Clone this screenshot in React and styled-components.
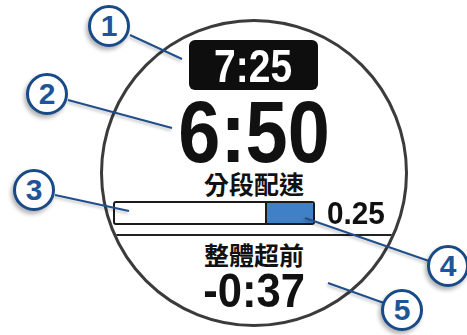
import styled, { createGlobalStyle } from 'styled-components';

const GlobalStyle = createGlobalStyle`
  html, body {
    margin: 0;
    padding: 0;
    background: #fff;
  }
`;

const callouts = [
  { n: 1, x: 109, y: 26 },
  { n: 2, x: 47, y: 94 },
  { n: 3, x: 34, y: 190 },
  { n: 4, x: 448, y: 266 },
  { n: 5, x: 402, y: 310 },
];

const leaders = [
  [130, 35, 182, 59],
  [68, 100, 172, 128],
  [55, 195, 129, 211],
  [305, 218, 429, 261],
  [328, 283, 384, 303],
];

export default function App() {
  return (
    <>
      <GlobalStyle />
      <Stage>
        <Face>
          <TimeBox>
            <TimeText>7:25</TimeText>
          </TimeBox>
          <Pace>6:50</Pace>
          <Label>分段配速</Label>
          <BarRow>
            <Bar>
              <BarFill $share={0.23} />
            </Bar>
            <BarValue>0.25</BarValue>
          </BarRow>
          <Divider />
          <Label $second>整體超前</Label>
          <Delta>-0:37</Delta>
        </Face>
        <Leaders width="467" height="335" viewBox="0 0 467 335">
          {leaders.map(([x1, y1, x2, y2], i) => (
            <line key={i} x1={x1} y1={y1} x2={x2} y2={y2} />
          ))}
        </Leaders>
        {callouts.map((c) => (
          <Callout key={c.n} $x={c.x} $y={c.y}>
            {c.n}
          </Callout>
        ))}
      </Stage>
    </>
  );
}

const Stage = styled.div`
  position: relative;
  width: 467px;
  height: 335px;
  overflow: hidden;
  background: #fff;
`;

const Face = styled.div`
  position: absolute;
  left: 100px;
  top: 19px;
  width: 308px;
  height: 308px;
  box-sizing: border-box;
  border: 3px solid #3b3b3b;
  border-radius: 50%;
  overflow: hidden;
  display: flex;
  flex-direction: column;
  align-items: center;
  padding-top: 18px;
`;

// no narrow face installed, so the bold digits get squeezed horizontally
const digits = `
  font-family: "Liberation Sans Narrow", "Liberation Sans", sans-serif;
  font-weight: 700;
  color: #111;
  white-space: nowrap;
  letter-spacing: 0;
`;

const TimeBox = styled.div`
  width: 129px;
  height: 50px;
  margin-left: -1px;
  border-radius: 6px;
  background: #0e0e0e;
  display: flex;
  justify-content: center;
`;

const TimeText = styled.span`
  ${digits}
  display: inline-block;
  color: #fff;
  font-size: 47px;
  line-height: 52px;
  transform: scaleX(0.83);
`;

const Pace = styled.div`
  ${digits}
  margin-top: 6px;
  height: 72px;
  font-size: 88px;
  line-height: 72px;
  transform: scaleX(0.86);
`;

const Label = styled.div`
  font-family: "Noto Sans CJK TC", "Noto Sans CJK SC", sans-serif;
  font-weight: 700;
  font-size: 25px;
  line-height: 26px;
  height: 26px;
  color: #111;
  margin-top: ${(p) => (p.$second ? '5px' : '2px')};
`;

const BarRow = styled.div`
  display: flex;
  align-items: center;
  gap: 12px;
  margin-top: 5px;
  margin-right: 10px;
  height: 24px;
`;

const Bar = styled.div`
  width: 202px;
  height: 24px;
  box-sizing: border-box;
  border: 2px solid #1a1a1a;
  border-radius: 3px;
  background: #fff;
  display: flex;
  justify-content: flex-end;
  overflow: hidden;
`;

const BarFill = styled.div`
  width: ${(p) => p.$share * 100}%;
  height: 100%;
  background: #3f80c6;
  border-left: 2px solid #1a1a1a;
`;

const BarValue = styled.div`
  ${digits}
  width: 58px;
  font-size: 32px;
  line-height: 26px;
  transform: scaleX(0.93);
  transform-origin: left center;
`;

const Divider = styled.div`
  align-self: stretch;
  height: 2px;
  background: #222;
  margin-top: 9px;
`;

const Delta = styled.div`
  ${digits}
  margin-top: 3px;
  font-size: 49px;
  line-height: 40px;
  transform: scaleX(0.89);
`;

const Leaders = styled.svg`
  position: absolute;
  left: 0;
  top: 0;
  pointer-events: none;
  filter: drop-shadow(-1px 2px 1.5px rgba(0, 0, 0, 0.25));

  line {
    stroke: #1f4f8c;
    stroke-width: 2;
  }
`;

const Callout = styled.div`
  position: absolute;
  left: ${(p) => p.$x - 21}px;
  top: ${(p) => p.$y - 21}px;
  width: 42px;
  height: 42px;
  box-sizing: border-box;
  border: 3.5px solid #174a86;
  border-radius: 50%;
  background: #fff;
  box-shadow: -2px 3px 4px rgba(0, 0, 0, 0.3);
  display: flex;
  align-items: center;
  justify-content: center;
  font-family: "Liberation Sans", Arial, sans-serif;
  font-weight: 700;
  font-size: 30px;
  color: #1d5596;
  line-height: 1;
`;
